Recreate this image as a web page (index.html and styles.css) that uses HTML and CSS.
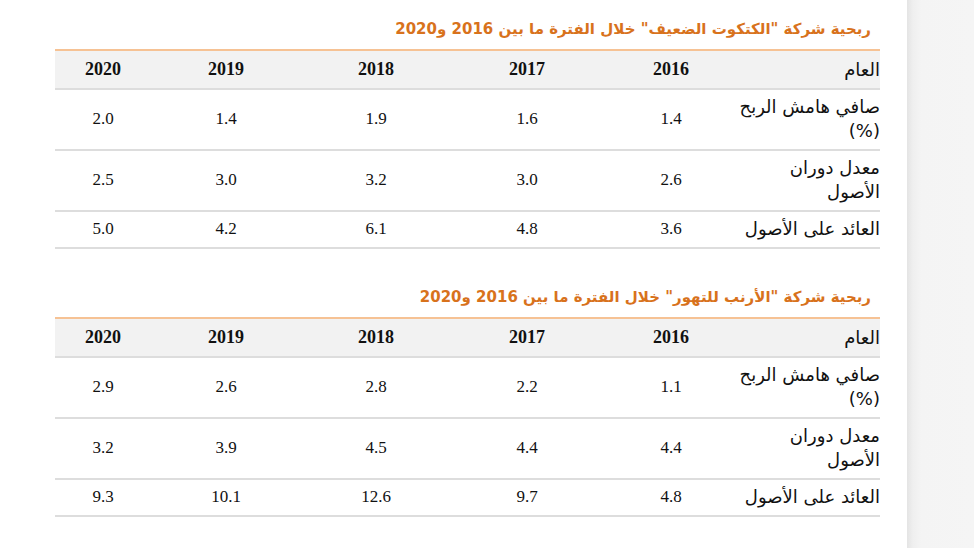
FILE: index.html
```html
<!DOCTYPE html>
<html lang="ar" dir="rtl">
<head>
<meta charset="utf-8">
<title>ربحية الشركات</title>
<link rel="stylesheet" href="styles.css">
</head>
<body>
<div class="page">
  <main class="content">
    <table class="data">
      <caption>ربحية شركة "الكتكوت الضعيف" خلال الفترة ما بين 2016 و2020</caption>
      <thead>
        <tr><th class="lbl">العام</th><th>2016</th><th>2017</th><th>2018</th><th>2019</th><th>2020</th></tr>
      </thead>
      <tbody>
        <tr><td class="lbl">صافي هامش الربح (%)</td><td>1.4</td><td>1.6</td><td>1.9</td><td>1.4</td><td>2.0</td></tr>
        <tr><td class="lbl">معدل دوران الأصول</td><td>2.6</td><td>3.0</td><td>3.2</td><td>3.0</td><td>2.5</td></tr>
        <tr><td class="lbl">العائد على الأصول</td><td>3.6</td><td>4.8</td><td>6.1</td><td>4.2</td><td>5.0</td></tr>
      </tbody>
    </table>
    <table class="data">
      <caption>ربحية شركة "الأرنب للتهور" خلال الفترة ما بين 2016 و2020</caption>
      <thead>
        <tr><th class="lbl">العام</th><th>2016</th><th>2017</th><th>2018</th><th>2019</th><th>2020</th></tr>
      </thead>
      <tbody>
        <tr><td class="lbl">صافي هامش الربح (%)</td><td>1.1</td><td>2.2</td><td>2.8</td><td>2.6</td><td>2.9</td></tr>
        <tr><td class="lbl">معدل دوران الأصول</td><td>4.4</td><td>4.4</td><td>4.5</td><td>3.9</td><td>3.2</td></tr>
        <tr><td class="lbl">العائد على الأصول</td><td>4.8</td><td>9.7</td><td>12.6</td><td>10.1</td><td>9.3</td></tr>
      </tbody>
    </table>
  </main>
  <aside class="side"></aside>
</div>
</body>
</html>
```

FILE: styles.css
```css
html, body {
  margin: 0;
  padding: 0;
  background: #ffffff;
}

.page {
  display: flex;
  flex-direction: row;
  height: 548px;
  direction: ltr;
}

.content {
  width: 907px;
  flex: 0 0 907px;
  direction: rtl;
  padding: 17px 27px 0 0;
  box-sizing: border-box;
  display: flex;
  flex-direction: column;
  align-items: flex-start;
  gap: 36px;
}

.side {
  flex: 1;
  background: linear-gradient(to right, #e4e4e4 0px, #efefef 6px, #f4f4f4 14px, #f5f5f5 100%);
}

.data {
  width: 825px;
  border-collapse: collapse;
  table-layout: fixed;
  font-family: "Liberation Serif", "DejaVu Sans", serif;
  color: #111;
}

.data caption {
  text-align: right;
  padding: 0 9px 8px 0;
  font-family: "DejaVu Sans", sans-serif;
  font-size: 15px;
  font-weight: bold;
  line-height: 24px;
  color: #d8721c;
}

.data thead tr {
  background: #f2f2f2;
  border-top: 2px solid #f6c294;
  border-bottom: 2px solid #dddddd;
}

.data th {
  height: 37px;
  padding: 0;
  font-size: 18px;
  font-weight: bold;
  text-align: center;
}

.data th.lbl {
  font-family: "DejaVu Sans", sans-serif;
  font-weight: normal;
  font-size: 18px;
  text-align: right;
}

.data tbody tr {
  border-bottom: 2px solid #dddddd;
}

.data td {
  padding: 5px 0 6px;
  font-size: 17px;
  line-height: 24px;
  text-align: center;
}

.data td.lbl {
  font-family: "DejaVu Sans", sans-serif;
  font-size: 18px;
  text-align: right;
}

.data th:nth-child(1), .data td:nth-child(1) { width: 141px; }
.data th:nth-child(2), .data td:nth-child(2) { width: 136px; }
.data th:nth-child(3), .data td:nth-child(3) { width: 152px; }
.data th:nth-child(4), .data td:nth-child(4) { width: 150px; }
.data th:nth-child(5), .data td:nth-child(5) { width: 150px; }
.data th:nth-child(6), .data td:nth-child(6) { width: 96px; }
```
